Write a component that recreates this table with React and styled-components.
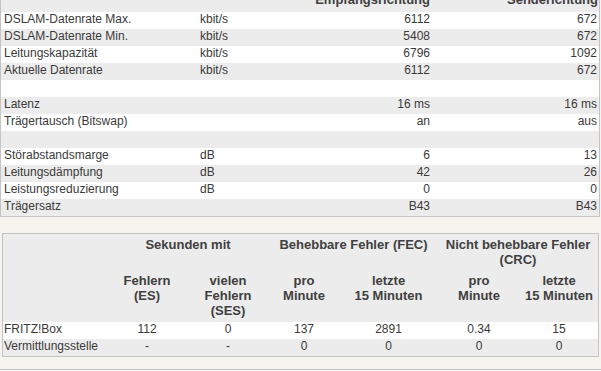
import React from 'react'
import styled, { createGlobalStyle } from 'styled-components'

const GlobalStyle = createGlobalStyle`
    body {
        margin: 0;
        background: #f6f4ef;
        font-family: "Liberation Sans", Arial, sans-serif;
        color: #3a3a3a;
        overflow: hidden;
    }
`

const Page = styled.div`
    margin-top: -9px;
`

const Table = styled.table`
    box-sizing: border-box;
    width: ${p => p.$width}px;
    margin-left: ${p => p.$left || 0}px;
    border: 1px solid #c4c4c4;
    border-spacing: 0;
    table-layout: fixed;
    background: #ececec;
    font-size: 12px;
`

const Row = styled.tr`
    background: ${p => (p.$alt ? '#ececec' : '#ffffff')};
    height: ${p => (p.$height ? `${p.$height}px` : 'auto')};
`

const Cell = styled.td`
    padding: 0 ${p => p.$padRight ?? 3}px 2px ${p => p.$padLeft ?? 3}px;
    line-height: 15px;
    text-align: ${p => p.$align || 'left'};
    white-space: nowrap;
`

const HeadCell = styled.th`
    padding: ${p => p.$padTop ?? 0}px ${p => p.$padRight ?? 2}px 0 2px;
    line-height: 15px;
    font-size: 13px;
    font-weight: bold;
    color: #404040;
    text-align: ${p => p.$align || 'center'};
    vertical-align: top;
`

const Gap = styled.div`
    height: ${p => p.$size}px;
`

const Footer = styled.div`
    border-top: 1px solid #c4c4c4;
    background: #fbfbfb;
    height: 20px;
`

const lineRows = [
    ['DSLAM-Datenrate Max.', 'kbit/s', '6112', '672'],
    ['DSLAM-Datenrate Min.', 'kbit/s', '5408', '672'],
    ['Leitungskapazität', 'kbit/s', '6796', '1092'],
    ['Aktuelle Datenrate', 'kbit/s', '6112', '672'],
    null,
    ['Latenz', '', '16 ms', '16 ms'],
    ['Trägertausch (Bitswap)', '', 'an', 'aus'],
    null,
    ['Störabstandsmarge', 'dB', '6', '13'],
    ['Leitungsdämpfung', 'dB', '42', '26'],
    ['Leistungsreduzierung', 'dB', '0', '0'],
    ['Trägersatz', '', 'B43', 'B43'],
]

const errorRows = [
    ['FRITZ!Box', '112', '0', '137', '2891', '0.34', '15'],
    ['Vermittlungsstelle', '-', '-', '0', '0', '0', '0'],
]

export default function App() {
    return (
        <Page>
            <GlobalStyle />
            <Table $width={600}>
                <colgroup>
                    <col style={{ width: 196 }} />
                    <col style={{ width: 100 }} />
                    <col style={{ width: 136 }} />
                    <col style={{ width: 166 }} />
                </colgroup>
                <thead>
                    <Row $alt $height={20}>
                        <HeadCell />
                        <HeadCell />
                        <HeadCell $align="right" $padRight={3}>Empfangsrichtung</HeadCell>
                        <HeadCell $align="right" $padRight={1}>Senderichtung</HeadCell>
                    </Row>
                </thead>
                <tbody>
                    {lineRows.map((row, idx) => {
                        const alt = idx % 2 === 1
                        if (!row) {
                            return <Row key={idx} $alt={alt} $height={17}><Cell colSpan={4}>&nbsp;</Cell></Row>
                        }
                        return (
                            <Row key={idx} $alt={alt}>
                                <Cell>{row[0]}</Cell>
                                <Cell>{row[1]}</Cell>
                                <Cell $align="right">{row[2]}</Cell>
                                <Cell $align="right" $padRight={2}>{row[3]}</Cell>
                            </Row>
                        )
                    })}
                </tbody>
            </Table>

            <Gap $size={16} />

            <Table $width={597} $left={2}>
                <colgroup>
                    <col style={{ width: 104 }} />
                    <col style={{ width: 80 }} />
                    <col style={{ width: 82 }} />
                    <col style={{ width: 70 }} />
                    <col style={{ width: 99 }} />
                    <col style={{ width: 82 }} />
                    <col style={{ width: 78 }} />
                </colgroup>
                <thead>
                    <Row $alt $height={36}>
                        <HeadCell $padTop={3} />
                        <HeadCell $padTop={3} colSpan={2}>Sekunden mit</HeadCell>
                        <HeadCell $padTop={3} colSpan={2}>Behebbare Fehler (FEC)</HeadCell>
                        <HeadCell $padTop={3} colSpan={2}>Nicht behebbare Fehler<br />(CRC)</HeadCell>
                    </Row>
                    <Row $alt $height={52}>
                        <HeadCell $padTop={3} />
                        <HeadCell $padTop={3}>Fehlern<br />(ES)</HeadCell>
                        <HeadCell $padTop={3}>vielen<br />Fehlern<br />(SES)</HeadCell>
                        <HeadCell $padTop={3}>pro<br />Minute</HeadCell>
                        <HeadCell $padTop={3}>letzte<br />15 Minuten</HeadCell>
                        <HeadCell $padTop={3}>pro<br />Minute</HeadCell>
                        <HeadCell $padTop={3}>letzte<br />15 Minuten</HeadCell>
                    </Row>
                </thead>
                <tbody>
                    {errorRows.map((row, idx) => (
                        <Row key={row[0]} $alt={idx % 2 === 1}>
                            <Cell $padLeft={1}>{row[0]}</Cell>
                            {row.slice(1).map((value, i) => (
                                <Cell key={i} $align="center">{value}</Cell>
                            ))}
                        </Row>
                    ))}
                </tbody>
            </Table>

            <Gap $size={12} />
            <Footer />
        </Page>
    )
}
